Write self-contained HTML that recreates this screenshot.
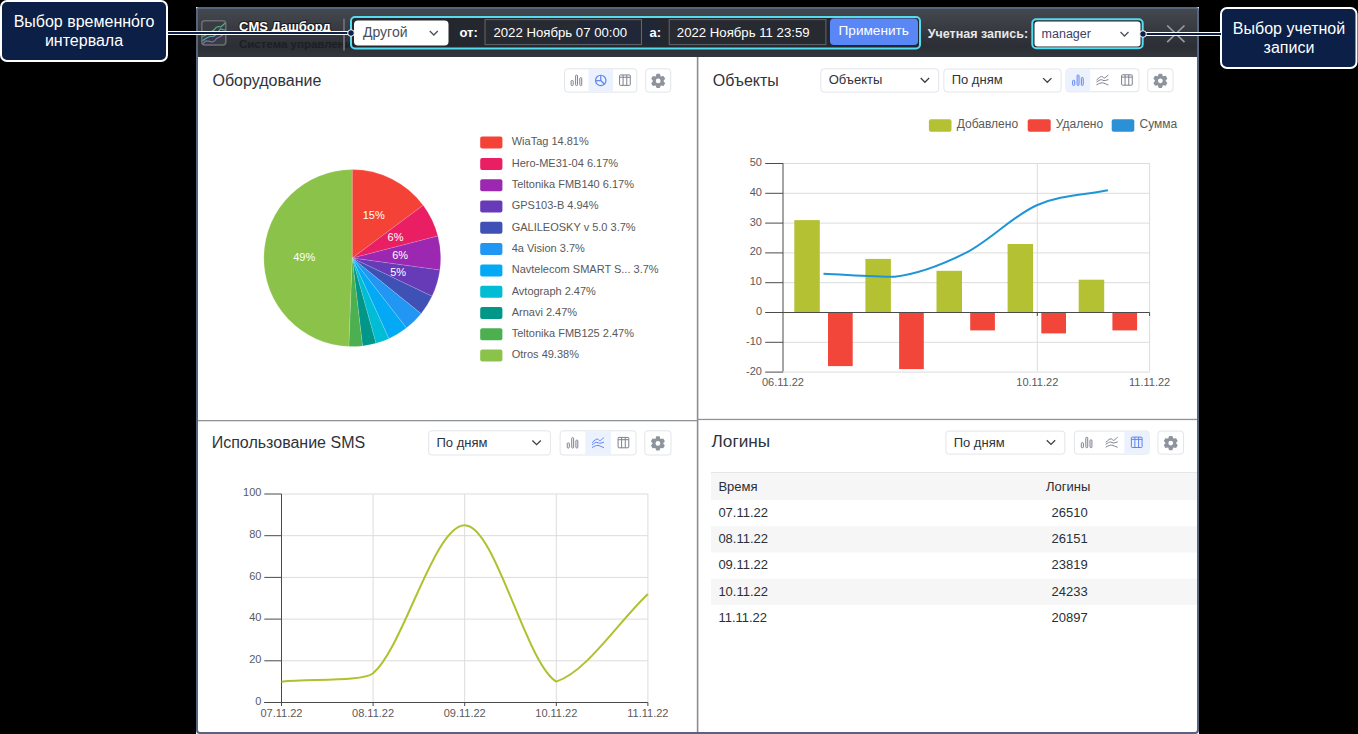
<!DOCTYPE html>
<html><head><meta charset="utf-8"><style>
html,body{margin:0;padding:0;background:#000;width:1358px;height:734px;overflow:hidden}
svg{display:block;font-family:"Liberation Sans", sans-serif}
</style></head><body>
<svg width="1358" height="734" viewBox="0 0 1358 734">
<rect x="0" y="0" width="1358" height="734" rx="0" fill="#000" />
<rect x="196" y="7" width="1003" height="727" rx="0" fill="#ffffff" />
<defs><linearGradient id="hg" x1="0" y1="0" x2="0" y2="1"><stop offset="0" stop-color="#45484f"/><stop offset="0.78" stop-color="#2b2e34"/><stop offset="1" stop-color="#33363c"/></linearGradient></defs>
<rect x="198" y="9" width="999" height="48" rx="0" fill="url(#hg)" />
<path d="M197,730 V10 Q197,8 199,8 H1196 Q1198,8 1198,10 V730 Q1198,733 1195,733 H200 Q197,733 197,730 Z" fill="none" stroke="#56647e" stroke-width="2"/>
<rect x="201.8" y="20.8" width="24" height="24.2" rx="3" fill="#393c43" stroke="#6b6e75" stroke-width="1.5" />
<polyline points="202.5,36.5 205,35.5 207.5,33.5 210,32 212.5,31 214.5,29.5 216,27.5 218.5,26.5 220.5,27 222.5,25.5 225.3,23" fill="none" stroke="#5fae78" stroke-width="1.2" stroke-linejoin="round"/>
<polyline points="202.5,40.8 205,39 207.5,37.5 210,36.5 213,36.5 215.5,35 218,32 220.5,28.8 223,29.5 225.3,30" fill="none" stroke="#55a6ac" stroke-width="1.2" stroke-linejoin="round"/>
<polyline points="202.8,43.8 205.5,41 208.5,41.2 212,42 214.5,41 216.5,38.5 219.5,37 223.2,34.8 225,33.8" fill="none" stroke="#7a72bd" stroke-width="1.2" stroke-linejoin="round"/>
<text x="239" y="30.6" font-size="13" fill="#ffffff" font-weight="700" text-anchor="start" style="paint-order:stroke" stroke="#1a1b1e" stroke-width="2">CMS Дашборд</text>
<text x="239" y="47.5" font-size="11.5" fill="#1c1f24" font-weight="700" text-anchor="start" >Система управления</text>
<rect x="343" y="18.6" width="2" height="32" rx="0" fill="#66696f" />
<rect x="351" y="17" width="569" height="31.5" rx="4" fill="#24272d" stroke="#55dcf0" stroke-width="2" />
<rect x="354" y="20.5" width="94.5" height="25" rx="4" fill="#ffffff" />
<text x="363" y="36.8" font-size="14" fill="#4a4f5b" font-weight="400" text-anchor="start" >Другой</text>
<polyline points="429.8,31 433.8,35 437.8,31" fill="none" stroke="#4a4f5b" stroke-width="1.3"/>
<text x="459.5" y="36.5" font-size="13" fill="#ffffff" font-weight="700" text-anchor="start" >от:</text>
<rect x="485" y="19.6" width="156.5" height="25" rx="0" fill="#272a30" stroke="#62666e" stroke-width="1" />
<rect x="578" y="21" width="62" height="22" rx="0" fill="#1d2740" opacity="0.6"/>
<text x="493.4" y="36.8" font-size="13.2" fill="#ffffff" font-weight="400" text-anchor="start" >2022 Ноябрь 07 00:00</text>
<rect x="642" y="21" width="17" height="22" rx="0" fill="#1d2740" opacity="0.6"/>
<text x="649.6" y="36.5" font-size="13" fill="#ffffff" font-weight="700" text-anchor="start" >а:</text>
<rect x="669.2" y="19.6" width="156.7" height="25" rx="0" fill="#272a30" stroke="#62666e" stroke-width="1" />
<text x="676.8" y="36.8" font-size="13.2" fill="#ffffff" font-weight="400" text-anchor="start" >2022 Ноябрь 11 23:59</text>
<rect x="830" y="18.6" width="88" height="26.5" rx="4" fill="#5a87f6" />
<text x="838.6" y="35.4" font-size="13.6" fill="#ffffff" font-weight="400" text-anchor="start" >Применить</text>
<text x="927.8" y="37.6" font-size="12.5" fill="#e8e8e8" font-weight="700" text-anchor="start" >Учетная запись:</text>
<rect x="1032.3" y="19.2" width="110.4" height="29" rx="4" fill="#24272d" stroke="#55dcf0" stroke-width="2" />
<rect x="1034.5" y="21.5" width="106" height="25" rx="3" fill="#ffffff" />
<text x="1041.6" y="38" font-size="12.5" fill="#3b3f6b" font-weight="400" text-anchor="start" >manager</text>
<polyline points="1120.5,32 1124.5,36 1128.5,32" fill="none" stroke="#4a4f5b" stroke-width="1.3"/>
<line x1="1167.2" y1="25.5" x2="1184.5" y2="42.1" stroke="#9c9ea2" stroke-width="1.6" />
<line x1="1184.5" y1="25.5" x2="1167.2" y2="42.1" stroke="#9c9ea2" stroke-width="1.6" />
<rect x="696.8" y="57" width="1.6" height="675" rx="0" fill="#8a8d93" />
<rect x="198" y="420" width="499" height="1.3" rx="0" fill="#8f9297" />
<rect x="698" y="418.8" width="499" height="1.3" rx="0" fill="#8f9297" />
<text x="212.5" y="85.5" font-size="16" fill="#2f333b" font-weight="400" text-anchor="start" >Оборудование</text>
<rect x="564.6" y="68.8" width="72.3" height="23.3" rx="3" fill="#fff" stroke="#e1e5ea" stroke-width="1" />
<rect x="588.53" y="69.3" width="24.43" height="22.3" rx="0" fill="#ebf1fd" />
<rect x="571.12" y="80.45" width="2.10" height="5.10" rx="0.8" fill="none" stroke="#7d8190" stroke-width="1"/>
<rect x="575.62" y="75.15" width="1.90" height="10.40" rx="0.8" fill="none" stroke="#7d8190" stroke-width="1"/>
<rect x="579.82" y="77.65" width="1.90" height="7.90" rx="0.8" fill="none" stroke="#7d8190" stroke-width="1"/>
<circle cx="600.75" cy="80.45" r="5.2" fill="none" stroke="#5f84f3" stroke-width="1.2"/>
<path d="M600.75,75.25 V80.45 L604.35,84.25 M600.75,80.45 L595.85,80.85000000000001" fill="none" stroke="#5f84f3" stroke-width="1.2"/>
<rect x="619.58" y="74.95" width="10.7" height="10.4" rx="0.8" fill="none" stroke="#7d8190" stroke-width="1"/>
<line x1="619.58" y1="77.25" x2="630.28" y2="77.25" stroke="#7d8190" stroke-width="1" />
<line x1="623.08" y1="74.95" x2="623.08" y2="85.35" stroke="#7d8190" stroke-width="1" />
<line x1="626.78" y1="74.95" x2="626.78" y2="85.35" stroke="#7d8190" stroke-width="1" />
<rect x="645.7" y="68.8" width="25" height="23.3" rx="3" fill="#fff" stroke="#e1e5ea" stroke-width="1" />
<path d="M655.62,76.44 L656.61,73.83 L659.79,73.83 L660.78,76.44 L660.82,76.46 L663.57,76.01 L665.17,78.77 L663.40,80.93 L663.40,80.97 L665.17,83.13 L663.57,85.89 L660.82,85.44 L660.78,85.46 L659.79,88.07 L656.61,88.07 L655.62,85.46 L655.58,85.44 L652.83,85.89 L651.23,83.13 L653.00,80.97 L653.00,80.93 L651.23,78.77 L652.83,76.01 L655.58,76.46Z M660.6,80.95 A2.4,2.4 0 1,0 655.8000000000001,80.95 A2.4,2.4 0 1,0 660.6,80.95Z" fill="#8e949e" fill-rule="evenodd"/>
<path d="M352.2,258.1 L352.20,169.60 A88.5,88.5 0 0,1 423.18,205.24 Z" fill="#f44336" stroke="#ffffff" stroke-width="0.5" stroke-opacity="0.3"/>
<path d="M352.2,258.1 L423.18,205.24 A88.5,88.5 0 0,1 437.90,236.01 Z" fill="#e91e63" stroke="#ffffff" stroke-width="0.5" stroke-opacity="0.3"/>
<path d="M352.2,258.1 L437.90,236.01 A88.5,88.5 0 0,1 439.89,270.05 Z" fill="#9c27b0" stroke="#ffffff" stroke-width="0.5" stroke-opacity="0.3"/>
<path d="M352.2,258.1 L439.89,270.05 A88.5,88.5 0 0,1 432.05,296.27 Z" fill="#673ab7" stroke="#ffffff" stroke-width="0.5" stroke-opacity="0.3"/>
<path d="M352.2,258.1 L432.05,296.27 A88.5,88.5 0 0,1 421.10,313.64 Z" fill="#3f51b5" stroke="#ffffff" stroke-width="0.5" stroke-opacity="0.3"/>
<path d="M352.2,258.1 L421.10,313.64 A88.5,88.5 0 0,1 406.45,328.02 Z" fill="#2196f3" stroke="#ffffff" stroke-width="0.5" stroke-opacity="0.3"/>
<path d="M352.2,258.1 L406.45,328.02 A88.5,88.5 0 0,1 388.88,338.64 Z" fill="#03a9f4" stroke="#ffffff" stroke-width="0.5" stroke-opacity="0.3"/>
<path d="M352.2,258.1 L388.88,338.64 A88.5,88.5 0 0,1 375.99,343.34 Z" fill="#00bcd4" stroke="#ffffff" stroke-width="0.5" stroke-opacity="0.3"/>
<path d="M352.2,258.1 L375.99,343.34 A88.5,88.5 0 0,1 362.52,346.00 Z" fill="#009688" stroke="#ffffff" stroke-width="0.5" stroke-opacity="0.3"/>
<path d="M352.2,258.1 L362.52,346.00 A88.5,88.5 0 0,1 348.81,346.53 Z" fill="#4caf50" stroke="#ffffff" stroke-width="0.5" stroke-opacity="0.3"/>
<path d="M352.2,258.1 L348.81,346.53 A88.5,88.5 0 0,1 352.20,169.60 Z" fill="#8bc34a" stroke="#ffffff" stroke-width="0.5" stroke-opacity="0.3"/>
<text x="373.7" y="219.2" font-size="11" fill="#ffffff" font-weight="400" text-anchor="middle" >15%</text>
<text x="395.5" y="241.4" font-size="11" fill="#ffffff" font-weight="400" text-anchor="middle" >6%</text>
<text x="400.1" y="259.3" font-size="11" fill="#ffffff" font-weight="400" text-anchor="middle" >6%</text>
<text x="398.2" y="275.9" font-size="11" fill="#ffffff" font-weight="400" text-anchor="middle" >5%</text>
<text x="304.2" y="261.2" font-size="11" fill="#ffffff" font-weight="400" text-anchor="middle" >49%</text>
<rect x="480.2" y="136.6" width="22.2" height="12" rx="2" fill="#f44336" />
<text x="511.7" y="145.4" font-size="11" fill="#595959" font-weight="400" text-anchor="start" >WiaTag 14.81%</text>
<rect x="480.2" y="157.9" width="22.2" height="12" rx="2" fill="#e91e63" />
<text x="511.7" y="166.70000000000002" font-size="11" fill="#595959" font-weight="400" text-anchor="start" >Hero-ME31-04 6.17%</text>
<rect x="480.2" y="179.2" width="22.2" height="12" rx="2" fill="#9c27b0" />
<text x="511.7" y="188.0" font-size="11" fill="#595959" font-weight="400" text-anchor="start" >Teltonika FMB140 6.17%</text>
<rect x="480.2" y="200.5" width="22.2" height="12" rx="2" fill="#673ab7" />
<text x="511.7" y="209.3" font-size="11" fill="#595959" font-weight="400" text-anchor="start" >GPS103-B 4.94%</text>
<rect x="480.2" y="221.8" width="22.2" height="12" rx="2" fill="#3f51b5" />
<text x="511.7" y="230.60000000000002" font-size="11" fill="#595959" font-weight="400" text-anchor="start" >GALILEOSKY v 5.0 3.7%</text>
<rect x="480.2" y="243.1" width="22.2" height="12" rx="2" fill="#2196f3" />
<text x="511.7" y="251.9" font-size="11" fill="#595959" font-weight="400" text-anchor="start" >4a Vision 3.7%</text>
<rect x="480.2" y="264.4" width="22.2" height="12" rx="2" fill="#03a9f4" />
<text x="511.7" y="273.2" font-size="11" fill="#595959" font-weight="400" text-anchor="start" >Navtelecom SMART S... 3.7%</text>
<rect x="480.2" y="285.7" width="22.2" height="12" rx="2" fill="#00bcd4" />
<text x="511.7" y="294.5" font-size="11" fill="#595959" font-weight="400" text-anchor="start" >Avtograph 2.47%</text>
<rect x="480.2" y="307.0" width="22.2" height="12" rx="2" fill="#009688" />
<text x="511.7" y="315.8" font-size="11" fill="#595959" font-weight="400" text-anchor="start" >Arnavi 2.47%</text>
<rect x="480.2" y="328.3" width="22.2" height="12" rx="2" fill="#4caf50" />
<text x="511.7" y="337.1" font-size="11" fill="#595959" font-weight="400" text-anchor="start" >Teltonika FMB125 2.47%</text>
<rect x="480.2" y="349.6" width="22.2" height="12" rx="2" fill="#8bc34a" />
<text x="511.7" y="358.40000000000003" font-size="11" fill="#595959" font-weight="400" text-anchor="start" >Otros 49.38%</text>
<text x="712.8" y="86" font-size="16" fill="#2f333b" font-weight="400" text-anchor="start" >Объекты</text>
<rect x="820.9" y="68.8" width="117.8" height="23.3" rx="3" fill="#fff" stroke="#e1e5ea" stroke-width="1" />
<text x="828.6999999999999" y="84.35000000000001" font-size="13" fill="#2f333b" font-weight="400" text-anchor="start" >Объекты</text>
<polyline points="920.6999999999999,78.05 924.9,82.25 929.0999999999999,78.05" fill="none" stroke="#3c4048" stroke-width="1.3"/>
<rect x="943.9" y="69.0" width="117.2" height="23" rx="3" fill="#fff" stroke="#e1e5ea" stroke-width="1" />
<text x="951.6999999999999" y="84.4" font-size="13" fill="#2f333b" font-weight="400" text-anchor="start" >По дням</text>
<polyline points="1043.1,78.1 1047.3,82.3 1051.5,78.1" fill="none" stroke="#3c4048" stroke-width="1.3"/>
<rect x="1066.0" y="68.8" width="73" height="23" rx="3" fill="#fff" stroke="#e1e5ea" stroke-width="1" />
<rect x="1066.50" y="69.3" width="23.67" height="22" rx="0" fill="#ebf1fd" />
<rect x="1072.63" y="80.30" width="2.10" height="5.10" rx="0.8" fill="none" stroke="#5f84f3" stroke-width="1"/>
<rect x="1077.13" y="75.00" width="1.90" height="10.40" rx="0.8" fill="none" stroke="#5f84f3" stroke-width="1"/>
<rect x="1081.33" y="77.50" width="1.90" height="7.90" rx="0.8" fill="none" stroke="#5f84f3" stroke-width="1"/>
<path d="M1096.80,79.80 C1099.00,77.80 1100.50,76.40 1101.70,76.50 S1103.50,78.10 1104.30,78.10 S1106.50,76.30 1108.00,75.30" fill="none" stroke="#7d8190" stroke-width="1" stroke-linecap="round"/>
<path d="M1096.80,81.90 C1098.50,80.60 1100.00,79.70 1101.30,79.70 S1103.00,80.70 1104.00,80.70 S1106.50,80.10 1108.00,79.70" fill="none" stroke="#7d8190" stroke-width="1" stroke-linecap="round"/>
<path d="M1096.80,84.70 C1099.00,83.50 1101.00,82.60 1102.40,82.80 S1106.00,84.10 1108.00,84.90" fill="none" stroke="#7d8190" stroke-width="1" stroke-linecap="round"/>
<rect x="1121.57" y="74.80" width="10.7" height="10.4" rx="0.8" fill="none" stroke="#7d8190" stroke-width="1"/>
<line x1="1121.57" y1="77.10" x2="1132.27" y2="77.10" stroke="#7d8190" stroke-width="1" />
<line x1="1125.07" y1="74.80" x2="1125.07" y2="85.20" stroke="#7d8190" stroke-width="1" />
<line x1="1128.77" y1="74.80" x2="1128.77" y2="85.20" stroke="#7d8190" stroke-width="1" />
<rect x="1147.7" y="68.8" width="25.3" height="23" rx="3" fill="#fff" stroke="#e1e5ea" stroke-width="1" />
<path d="M1157.77,76.29 L1158.76,73.68 L1161.94,73.68 L1162.93,76.29 L1162.97,76.31 L1165.72,75.86 L1167.32,78.62 L1165.55,80.78 L1165.55,80.82 L1167.32,82.98 L1165.72,85.74 L1162.97,85.29 L1162.93,85.31 L1161.94,87.92 L1158.76,87.92 L1157.77,85.31 L1157.73,85.29 L1154.98,85.74 L1153.38,82.98 L1155.15,80.82 L1155.15,80.78 L1153.38,78.62 L1154.98,75.86 L1157.73,76.31Z M1162.7500000000002,80.8 A2.4,2.4 0 1,0 1157.95,80.8 A2.4,2.4 0 1,0 1162.7500000000002,80.8Z" fill="#8e949e" fill-rule="evenodd"/>
<rect x="928.9" y="119.3" width="22.6" height="12.4" rx="2" fill="#b3c133" />
<text x="956.8" y="128.3" font-size="12" fill="#5a5a5a" font-weight="400" text-anchor="start" >Добавлено</text>
<rect x="1027.7" y="119.3" width="23" height="12.4" rx="2" fill="#f3463a" />
<text x="1055.8" y="128.3" font-size="12" fill="#5a5a5a" font-weight="400" text-anchor="start" >Удалено</text>
<rect x="1111.7" y="119.3" width="22.6" height="12.4" rx="2" fill="#2b90d6" />
<text x="1139.5" y="128.3" font-size="12" fill="#5a5a5a" font-weight="400" text-anchor="start" >Сумма</text>
<line x1="783" y1="372.1" x2="1149.6" y2="372.1" stroke="#dcdcdc" stroke-width="1" />
<line x1="765.2" y1="372.1" x2="783" y2="372.1" stroke="#4a4a4a" stroke-width="1" />
<text x="762" y="374.5" font-size="11" fill="#5a5a5a" font-weight="400" text-anchor="end" >-20</text>
<line x1="783" y1="342.3" x2="1149.6" y2="342.3" stroke="#dcdcdc" stroke-width="1" />
<line x1="765.2" y1="342.3" x2="783" y2="342.3" stroke="#4a4a4a" stroke-width="1" />
<text x="762" y="344.7" font-size="11" fill="#5a5a5a" font-weight="400" text-anchor="end" >-10</text>
<line x1="765.2" y1="312.5" x2="783" y2="312.5" stroke="#4a4a4a" stroke-width="1" />
<text x="762" y="314.9" font-size="11" fill="#5a5a5a" font-weight="400" text-anchor="end" >0</text>
<line x1="783" y1="282.7" x2="1149.6" y2="282.7" stroke="#dcdcdc" stroke-width="1" />
<line x1="765.2" y1="282.7" x2="783" y2="282.7" stroke="#4a4a4a" stroke-width="1" />
<text x="762" y="285.1" font-size="11" fill="#5a5a5a" font-weight="400" text-anchor="end" >10</text>
<line x1="783" y1="252.9" x2="1149.6" y2="252.9" stroke="#dcdcdc" stroke-width="1" />
<line x1="765.2" y1="252.9" x2="783" y2="252.9" stroke="#4a4a4a" stroke-width="1" />
<text x="762" y="255.3" font-size="11" fill="#5a5a5a" font-weight="400" text-anchor="end" >20</text>
<line x1="783" y1="223.1" x2="1149.6" y2="223.1" stroke="#dcdcdc" stroke-width="1" />
<line x1="765.2" y1="223.1" x2="783" y2="223.1" stroke="#4a4a4a" stroke-width="1" />
<text x="762" y="225.5" font-size="11" fill="#5a5a5a" font-weight="400" text-anchor="end" >30</text>
<line x1="783" y1="193.3" x2="1149.6" y2="193.3" stroke="#dcdcdc" stroke-width="1" />
<line x1="765.2" y1="193.3" x2="783" y2="193.3" stroke="#4a4a4a" stroke-width="1" />
<text x="762" y="195.7" font-size="11" fill="#5a5a5a" font-weight="400" text-anchor="end" >40</text>
<line x1="783" y1="163.5" x2="1149.6" y2="163.5" stroke="#dcdcdc" stroke-width="1" />
<line x1="765.2" y1="163.5" x2="783" y2="163.5" stroke="#4a4a4a" stroke-width="1" />
<text x="762" y="165.9" font-size="11" fill="#5a5a5a" font-weight="400" text-anchor="end" >50</text>
<line x1="1037.3" y1="163.25" x2="1037.3" y2="371.5" stroke="#dcdcdc" stroke-width="1" />
<line x1="1149.6" y1="163.25" x2="1149.6" y2="371.5" stroke="#dcdcdc" stroke-width="1" />
<line x1="783" y1="163.25" x2="783" y2="371.5" stroke="#4a4a4a" stroke-width="1" />
<line x1="783" y1="312.5" x2="1149.6" y2="312.5" stroke="#4a4a4a" stroke-width="1" />
<line x1="1037.3" y1="312.5" x2="1037.3" y2="316" stroke="#4a4a4a" stroke-width="1" />
<line x1="1149.6" y1="312.5" x2="1149.6" y2="316" stroke="#4a4a4a" stroke-width="1" />
<text x="783" y="386.2" font-size="11" fill="#5a5a5a" font-weight="400" text-anchor="middle" >06.11.22</text>
<text x="1037.3" y="386.2" font-size="11" fill="#5a5a5a" font-weight="400" text-anchor="middle" >10.11.22</text>
<text x="1149.6" y="386.2" font-size="11" fill="#5a5a5a" font-weight="400" text-anchor="middle" >11.11.22</text>
<rect x="794.3" y="220.1" width="25.5" height="91.9" rx="0" fill="#b3c133" />
<rect x="828.0" y="313" width="24.7" height="53.1" rx="0" fill="#f3463a" />
<rect x="865.4" y="258.9" width="25.5" height="53.1" rx="0" fill="#b3c133" />
<rect x="899.1" y="313" width="24.7" height="56.1" rx="0" fill="#f3463a" />
<rect x="936.5" y="270.8" width="25.5" height="41.2" rx="0" fill="#b3c133" />
<rect x="970.2" y="313" width="24.7" height="17.4" rx="0" fill="#f3463a" />
<rect x="1007.6" y="244.0" width="25.5" height="68.0" rx="0" fill="#b3c133" />
<rect x="1041.3" y="313" width="24.7" height="20.4" rx="0" fill="#f3463a" />
<rect x="1078.7" y="279.7" width="25.5" height="32.3" rx="0" fill="#b3c133" />
<rect x="1112.4" y="313" width="24.7" height="17.4" rx="0" fill="#f3463a" />
<path d="M823.50,273.76 C847.18,274.75 870.92,276.39 894.60,276.74 C918.28,273.96 942.02,264.81 965.70,252.90 C989.38,240.99 1013.12,215.64 1036.80,205.22 C1060.48,194.80 1084.22,195.28 1107.90,190.32" fill="none" stroke="#1f95d8" stroke-width="2"/>
<text x="211.7" y="448.2" font-size="16" fill="#2f333b" font-weight="400" text-anchor="start" >Использование SMS</text>
<rect x="428.7" y="430.8" width="121.7" height="24.2" rx="3" fill="#fff" stroke="#e1e5ea" stroke-width="1" />
<text x="436.5" y="446.8" font-size="13" fill="#2f333b" font-weight="400" text-anchor="start" >По дням</text>
<polyline points="532.4,440.50000000000006 536.6,444.70000000000005 540.8,440.50000000000006" fill="none" stroke="#3c4048" stroke-width="1.3"/>
<rect x="560.1" y="430.8" width="75.9" height="24.2" rx="3" fill="#fff" stroke="#e1e5ea" stroke-width="1" />
<rect x="585.23" y="431.3" width="25.63" height="23.2" rx="0" fill="#ebf1fd" />
<rect x="567.22" y="442.90" width="2.10" height="5.10" rx="0.8" fill="none" stroke="#7d8190" stroke-width="1"/>
<rect x="571.72" y="437.60" width="1.90" height="10.40" rx="0.8" fill="none" stroke="#7d8190" stroke-width="1"/>
<rect x="575.92" y="440.10" width="1.90" height="7.90" rx="0.8" fill="none" stroke="#7d8190" stroke-width="1"/>
<path d="M592.35,442.40 C594.55,440.40 596.05,439.00 597.25,439.10 S599.05,440.70 599.85,440.70 S602.05,438.90 603.55,437.90" fill="none" stroke="#5f84f3" stroke-width="1" stroke-linecap="round"/>
<path d="M592.35,444.50 C594.05,443.20 595.55,442.30 596.85,442.30 S598.55,443.30 599.55,443.30 S602.05,442.70 603.55,442.30" fill="none" stroke="#5f84f3" stroke-width="1" stroke-linecap="round"/>
<path d="M592.35,447.30 C594.55,446.10 596.55,445.20 597.95,445.40 S601.55,446.70 603.55,447.50" fill="none" stroke="#5f84f3" stroke-width="1" stroke-linecap="round"/>
<rect x="618.08" y="437.40" width="10.7" height="10.4" rx="0.8" fill="none" stroke="#7d8190" stroke-width="1"/>
<line x1="618.08" y1="439.70" x2="628.78" y2="439.70" stroke="#7d8190" stroke-width="1" />
<line x1="621.58" y1="437.40" x2="621.58" y2="447.80" stroke="#7d8190" stroke-width="1" />
<line x1="625.28" y1="437.40" x2="625.28" y2="447.80" stroke="#7d8190" stroke-width="1" />
<rect x="644.8" y="430.8" width="26.2" height="24.2" rx="3" fill="#fff" stroke="#e1e5ea" stroke-width="1" />
<path d="M655.32,438.89 L656.31,436.28 L659.49,436.28 L660.48,438.89 L660.52,438.91 L663.27,438.46 L664.87,441.22 L663.10,443.38 L663.10,443.42 L664.87,445.58 L663.27,448.34 L660.52,447.89 L660.48,447.91 L659.49,450.52 L656.31,450.52 L655.32,447.91 L655.28,447.89 L652.53,448.34 L650.93,445.58 L652.70,443.42 L652.70,443.38 L650.93,441.22 L652.53,438.46 L655.28,438.91Z M660.3,443.40000000000003 A2.4,2.4 0 1,0 655.5,443.40000000000003 A2.4,2.4 0 1,0 660.3,443.40000000000003Z" fill="#8e949e" fill-rule="evenodd"/>
<line x1="281.5" y1="660.8" x2="647.9" y2="660.8" stroke="#dcdcdc" stroke-width="1" />
<line x1="281.5" y1="619.1" x2="647.9" y2="619.1" stroke="#dcdcdc" stroke-width="1" />
<line x1="281.5" y1="577.4" x2="647.9" y2="577.4" stroke="#dcdcdc" stroke-width="1" />
<line x1="281.5" y1="535.7" x2="647.9" y2="535.7" stroke="#dcdcdc" stroke-width="1" />
<line x1="281.5" y1="494.0" x2="647.9" y2="494.0" stroke="#dcdcdc" stroke-width="1" />
<line x1="264.3" y1="702.5" x2="281.5" y2="702.5" stroke="#4a4a4a" stroke-width="1" />
<text x="261.4" y="704.7" font-size="11" fill="#5a5a5a" font-weight="400" text-anchor="end" >0</text>
<line x1="264.3" y1="660.8" x2="281.5" y2="660.8" stroke="#4a4a4a" stroke-width="1" />
<text x="261.4" y="663.0" font-size="11" fill="#5a5a5a" font-weight="400" text-anchor="end" >20</text>
<line x1="264.3" y1="619.1" x2="281.5" y2="619.1" stroke="#4a4a4a" stroke-width="1" />
<text x="261.4" y="621.3" font-size="11" fill="#5a5a5a" font-weight="400" text-anchor="end" >40</text>
<line x1="264.3" y1="577.4" x2="281.5" y2="577.4" stroke="#4a4a4a" stroke-width="1" />
<text x="261.4" y="579.6" font-size="11" fill="#5a5a5a" font-weight="400" text-anchor="end" >60</text>
<line x1="264.3" y1="535.7" x2="281.5" y2="535.7" stroke="#4a4a4a" stroke-width="1" />
<text x="261.4" y="537.9" font-size="11" fill="#5a5a5a" font-weight="400" text-anchor="end" >80</text>
<line x1="264.3" y1="494.0" x2="281.5" y2="494.0" stroke="#4a4a4a" stroke-width="1" />
<text x="261.4" y="496.2" font-size="11" fill="#5a5a5a" font-weight="400" text-anchor="end" >100</text>
<line x1="373.1" y1="494" x2="373.1" y2="702" stroke="#dcdcdc" stroke-width="1" />
<line x1="464.7" y1="494" x2="464.7" y2="702" stroke="#dcdcdc" stroke-width="1" />
<line x1="556.3" y1="494" x2="556.3" y2="702" stroke="#dcdcdc" stroke-width="1" />
<line x1="647.9" y1="494" x2="647.9" y2="702" stroke="#dcdcdc" stroke-width="1" />
<line x1="281.5" y1="494" x2="281.5" y2="706" stroke="#4a4a4a" stroke-width="1" />
<line x1="264.3" y1="702.5" x2="647.9" y2="702.5" stroke="#4a4a4a" stroke-width="1" />
<line x1="281.5" y1="702.5" x2="281.5" y2="706" stroke="#4a4a4a" stroke-width="1" />
<line x1="373.1" y1="702.5" x2="373.1" y2="706" stroke="#4a4a4a" stroke-width="1" />
<line x1="464.7" y1="702.5" x2="464.7" y2="706" stroke="#4a4a4a" stroke-width="1" />
<line x1="556.3" y1="702.5" x2="556.3" y2="706" stroke="#4a4a4a" stroke-width="1" />
<line x1="647.9" y1="702.5" x2="647.9" y2="706" stroke="#4a4a4a" stroke-width="1" />
<text x="281.5" y="716.7" font-size="11" fill="#5a5a5a" font-weight="400" text-anchor="middle" >07.11.22</text>
<text x="373.1" y="716.7" font-size="11" fill="#5a5a5a" font-weight="400" text-anchor="middle" >08.11.22</text>
<text x="464.7" y="716.7" font-size="11" fill="#5a5a5a" font-weight="400" text-anchor="middle" >09.11.22</text>
<text x="556.3" y="716.7" font-size="11" fill="#5a5a5a" font-weight="400" text-anchor="middle" >10.11.22</text>
<text x="647.9" y="716.7" font-size="11" fill="#5a5a5a" font-weight="400" text-anchor="middle" >11.11.22</text>
<path d="M281.50,681.65 C312.00,678.87 363.33,681.65 373.10,673.31 C403.60,647.27 434.20,525.27 464.70,525.27 C495.20,525.27 525.80,663.42 556.30,681.65 C586.80,671.44 617.40,623.24 647.90,594.08" fill="none" stroke="#b0c12f" stroke-width="2"/>
<text x="711.6" y="447" font-size="16" fill="#2f333b" font-weight="400" text-anchor="start" textLength="58.5" lengthAdjust="spacingAndGlyphs">Логины</text>
<rect x="945.9" y="431.1" width="118.9" height="23" rx="3" fill="#fff" stroke="#e1e5ea" stroke-width="1" />
<text x="953.6999999999999" y="446.5" font-size="13" fill="#2f333b" font-weight="400" text-anchor="start" >По дням</text>
<polyline points="1046.8,440.20000000000005 1051.0,444.40000000000003 1055.2,440.20000000000005" fill="none" stroke="#3c4048" stroke-width="1.3"/>
<rect x="1074.4" y="431.1" width="74.7" height="23" rx="3" fill="#fff" stroke="#e1e5ea" stroke-width="1" />
<rect x="1124.37" y="431.6" width="24.23" height="22" rx="0" fill="#ebf1fd" />
<rect x="1081.32" y="442.60" width="2.10" height="5.10" rx="0.8" fill="none" stroke="#7d8190" stroke-width="1"/>
<rect x="1085.82" y="437.30" width="1.90" height="10.40" rx="0.8" fill="none" stroke="#7d8190" stroke-width="1"/>
<rect x="1090.02" y="439.80" width="1.90" height="7.90" rx="0.8" fill="none" stroke="#7d8190" stroke-width="1"/>
<path d="M1106.05,442.10 C1108.25,440.10 1109.75,438.70 1110.95,438.80 S1112.75,440.40 1113.55,440.40 S1115.75,438.60 1117.25,437.60" fill="none" stroke="#7d8190" stroke-width="1" stroke-linecap="round"/>
<path d="M1106.05,444.20 C1107.75,442.90 1109.25,442.00 1110.55,442.00 S1112.25,443.00 1113.25,443.00 S1115.75,442.40 1117.25,442.00" fill="none" stroke="#7d8190" stroke-width="1" stroke-linecap="round"/>
<path d="M1106.05,447.00 C1108.25,445.80 1110.25,444.90 1111.65,445.10 S1115.25,446.40 1117.25,447.20" fill="none" stroke="#7d8190" stroke-width="1" stroke-linecap="round"/>
<rect x="1131.38" y="437.10" width="10.7" height="10.4" rx="0.8" fill="none" stroke="#5f84f3" stroke-width="1"/>
<line x1="1131.38" y1="439.40" x2="1142.08" y2="439.40" stroke="#5f84f3" stroke-width="1" />
<line x1="1134.88" y1="437.10" x2="1134.88" y2="447.50" stroke="#5f84f3" stroke-width="1" />
<line x1="1138.58" y1="437.10" x2="1138.58" y2="447.50" stroke="#5f84f3" stroke-width="1" />
<rect x="1157.9" y="431.1" width="25.7" height="23" rx="3" fill="#fff" stroke="#e1e5ea" stroke-width="1" />
<path d="M1168.17,438.59 L1169.16,435.98 L1172.34,435.98 L1173.33,438.59 L1173.37,438.61 L1176.12,438.16 L1177.72,440.92 L1175.95,443.08 L1175.95,443.12 L1177.72,445.28 L1176.12,448.04 L1173.37,447.59 L1173.33,447.61 L1172.34,450.22 L1169.16,450.22 L1168.17,447.61 L1168.13,447.59 L1165.38,448.04 L1163.78,445.28 L1165.55,443.12 L1165.55,443.08 L1163.78,440.92 L1165.38,438.16 L1168.13,438.61Z M1173.15,443.1 A2.4,2.4 0 1,0 1168.35,443.1 A2.4,2.4 0 1,0 1173.15,443.1Z" fill="#8e949e" fill-rule="evenodd"/>
<rect x="711" y="472" width="486" height="1" rx="0" fill="#e6e6e6" />
<rect x="711" y="473" width="486" height="27" rx="0" fill="#f6f6f6" />
<text x="718.4" y="491" font-size="13" fill="#2b2e36" font-weight="400" text-anchor="start" >Время</text>
<text x="1046" y="491" font-size="13" fill="#2b2e36" font-weight="400" text-anchor="start" >Логины</text>
<text x="718.4" y="516.8" font-size="13" fill="#2b2e36" font-weight="400" text-anchor="start" >07.11.22</text>
<text x="1051.6" y="516.8" font-size="13" fill="#2b2e36" font-weight="400" text-anchor="start" >26510</text>
<rect x="711" y="526.25" width="486" height="26.25" rx="0" fill="#f6f6f6" />
<text x="718.4" y="543.0" font-size="13" fill="#2b2e36" font-weight="400" text-anchor="start" >08.11.22</text>
<text x="1051.6" y="543.0" font-size="13" fill="#2b2e36" font-weight="400" text-anchor="start" >26151</text>
<text x="718.4" y="569.3" font-size="13" fill="#2b2e36" font-weight="400" text-anchor="start" >09.11.22</text>
<text x="1051.6" y="569.3" font-size="13" fill="#2b2e36" font-weight="400" text-anchor="start" >23819</text>
<rect x="711" y="578.75" width="486" height="26.25" rx="0" fill="#f6f6f6" />
<text x="718.4" y="595.5" font-size="13" fill="#2b2e36" font-weight="400" text-anchor="start" >10.11.22</text>
<text x="1051.6" y="595.5" font-size="13" fill="#2b2e36" font-weight="400" text-anchor="start" >24233</text>
<text x="718.4" y="621.8" font-size="13" fill="#2b2e36" font-weight="400" text-anchor="start" >11.11.22</text>
<text x="1051.6" y="621.8" font-size="13" fill="#2b2e36" font-weight="400" text-anchor="start" >20897</text>
<rect x="1" y="1" width="166" height="60" rx="6" fill="#0b1f47" stroke="#ffffff" stroke-width="2" />
<text x="84" y="26.7" font-size="16" fill="#ffffff" font-weight="400" text-anchor="middle" >Выбор временно́го</text>
<text x="84" y="45.8" font-size="16" fill="#ffffff" font-weight="400" text-anchor="middle" >интервала</text>
<rect x="1221" y="8" width="135.5" height="60" rx="6" fill="#0b1f47" stroke="#ffffff" stroke-width="2" />
<text x="1289" y="33.6" font-size="16" fill="#ffffff" font-weight="400" text-anchor="middle" >Выбор учетной</text>
<text x="1289" y="52.6" font-size="16" fill="#ffffff" font-weight="400" text-anchor="middle" >записи</text>
<rect x="168" y="31" width="183" height="4" rx="0" fill="#ffffff" />
<rect x="168" y="32" width="183" height="2" rx="0" fill="#0b1f47" />
<circle cx="351" cy="33" r="3.3" fill="#0b1f47" stroke="#ffffff" stroke-width="1"/>
<rect x="1143" y="32" width="78" height="4" rx="0" fill="#ffffff" />
<rect x="1143" y="33" width="78" height="2" rx="0" fill="#0b1f47" />
<circle cx="1143" cy="34" r="3.3" fill="#0b1f47" stroke="#ffffff" stroke-width="1"/>
</svg></body></html>
